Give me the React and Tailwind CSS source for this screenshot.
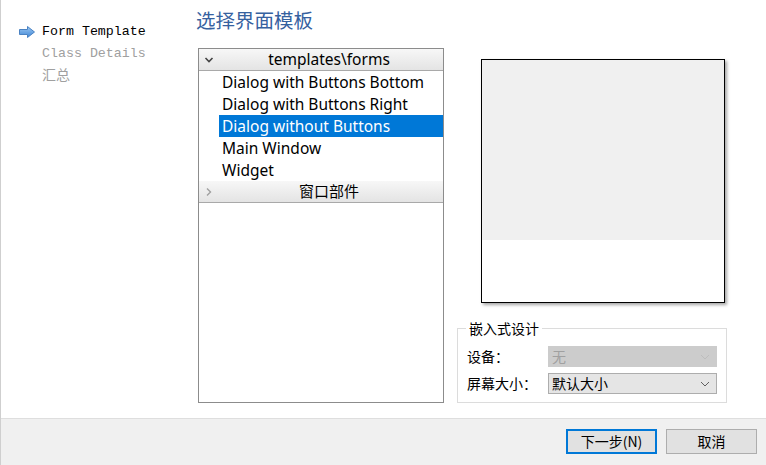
const cjk = { fontFamily: '"Noto Sans CJK SC", "Noto Sans", sans-serif' }
const mono = { fontFamily: '"Liberation Mono", "Noto Sans CJK SC", monospace' }
const ui = { fontFamily: '"Noto Sans", "Noto Sans CJK SC", sans-serif' }

function NavArrow() {
  return (
    <svg width="16" height="12" viewBox="0 0 16 12" className="shrink-0">
      <defs>
        <linearGradient id="ag" x1="0" y1="0" x2="0" y2="1">
          <stop offset="0" stopColor="#9cc8f2" />
          <stop offset="1" stopColor="#3f86d6" />
        </linearGradient>
      </defs>
      <path d="M0.5 3.5 H8.5 V0.5 L15.5 6 L8.5 11.5 V8.5 H0.5 Z" fill="url(#ag)" stroke="#4a82c2" strokeWidth="1" strokeLinejoin="round" />
    </svg>
  )
}

function Chevron({ dir }) {
  return (
    <svg width="10" height="10" viewBox="0 0 10 10" className="shrink-0">
      {dir === 'down'
        ? <path d="M1.5 3 L5 6.5 L8.5 3" fill="none" stroke="#444" strokeWidth="1.6" />
        : <path d="M3 1.5 L6.5 5 L3 8.5" fill="none" stroke="#a0a0a0" strokeWidth="1.4" />}
    </svg>
  )
}

function GroupHeader({ label, dir, font, size }) {
  return (
    <div className={`relative h-[22px] flex items-center justify-center pl-4 border-b border-[#a9a9a9] bg-gradient-to-b from-[#f7f7f7] to-[#e4e4e4] text-black ${size}`} style={font}>
      <span className="absolute left-[5px] top-[6px]"><Chevron dir={dir} /></span>
      {label}
    </div>
  )
}

function Combo({ value, disabled }) {
  return (
    <div className={`w-[169px] h-[21px] flex items-center justify-between pl-[3px] pr-[6px] border text-[14px] ${disabled ? 'bg-[#cccccc] border-[#cccccc] text-[#a0a0a0]' : 'bg-[#e5e5e5] border-[#adadad] text-black'}`} style={cjk}>
      <span>{value}</span>
      <svg width="10" height="6" viewBox="0 0 10 6">
        <path d="M1 1 L5 5 L9 1" fill="none" stroke={disabled ? '#bdbdbd' : '#606060'} strokeWidth="1" />
      </svg>
    </div>
  )
}

export default function App() {
  const items = ['Dialog with Buttons Bottom', 'Dialog with Buttons Right', 'Dialog without Buttons', 'Main Window', 'Widget']
  const selected = 2

  return (
    <div className="w-[766px] h-[465px] flex flex-col bg-white border-l border-[#cfcfcf] overflow-hidden">
      <div className="flex h-[418px]">
        {/* Steps */}
        <div className="w-[195px] pt-[21px] pl-[18px] flex flex-col text-[13.3px] leading-[21.5px]">
          <div className="flex items-center gap-[7px] text-black" style={mono}>
            <NavArrow />
            Form Template
          </div>
          <div className="pl-[23px] text-[#a0a0a0]" style={mono}>Class Details</div>
          <div className="pl-[23px] text-[#a0a0a0] text-[14px]" style={cjk}>汇总</div>
        </div>

        {/* Page */}
        <div className="flex flex-col">
          <div className="h-[48px] pt-[7px] text-[19.5px] leading-[26px] text-[#36619f]" style={cjk}>选择界面模板</div>
          <div className="flex">
            <div className="ml-[2px] w-[246px] h-[355px] border border-[#8c8c8c] flex flex-col">
              <GroupHeader label="templates\forms" dir="down" font={ui} size="text-[15.5px]" />
              <div className="flex flex-col pl-[20px] text-[15.5px] text-black" style={ui}>
                {items.map((it, i) => (
                  <div key={it} className={`h-[22px] leading-[22px] pl-[3px] ${i === selected ? 'bg-[#0078d7] text-white' : ''}`}>{it}</div>
                ))}
              </div>
              <GroupHeader label="窗口部件" dir="right" font={cjk} size="text-[15px]" />
            </div>

            <div className="flex flex-col">
              <div className="ml-[37px] mt-[11px] w-[244px] h-[244px] border border-black flex flex-col shadow-[2px_2px_3px_rgba(0,0,0,0.35)]">
                <div className="h-[180px] bg-[#f0f0f0]" />
                <div className="flex-1 bg-white" />
              </div>

              <div className="relative ml-[13px] mt-[25px] w-[270px] h-[75px] border border-[#dcdcdc] pt-[17px] pl-[9px] flex flex-col gap-[6px] text-[14px] text-black" style={cjk}>
                <span className="absolute left-[8px] -top-[11px] bg-white px-[3px] leading-[20px]">嵌入式设计</span>
                <div className="flex items-center">
                  <span className="w-[81px]">设备：</span>
                  <Combo value="无" disabled />
                </div>
                <div className="flex items-center">
                  <span className="w-[81px]">屏幕大小：</span>
                  <Combo value="默认大小" />
                </div>
              </div>
            </div>
          </div>
        </div>
      </div>

      {/* Buttons */}
      <div className="flex-1 bg-[#f0f0f0] border-t border-[#dedede] flex justify-end gap-[9px] pt-[10px] pr-[9px] text-[14px] text-black" style={cjk}>
        <button className="w-[91px] h-[25px] bg-[#e1e1e1] border-2 border-[#0078d7] flex items-center justify-center">下一步(N)</button>
        <button className="w-[91px] h-[25px] bg-[#e1e1e1] border border-[#adadad] flex items-center justify-center">取消</button>
      </div>
    </div>
  )
}
